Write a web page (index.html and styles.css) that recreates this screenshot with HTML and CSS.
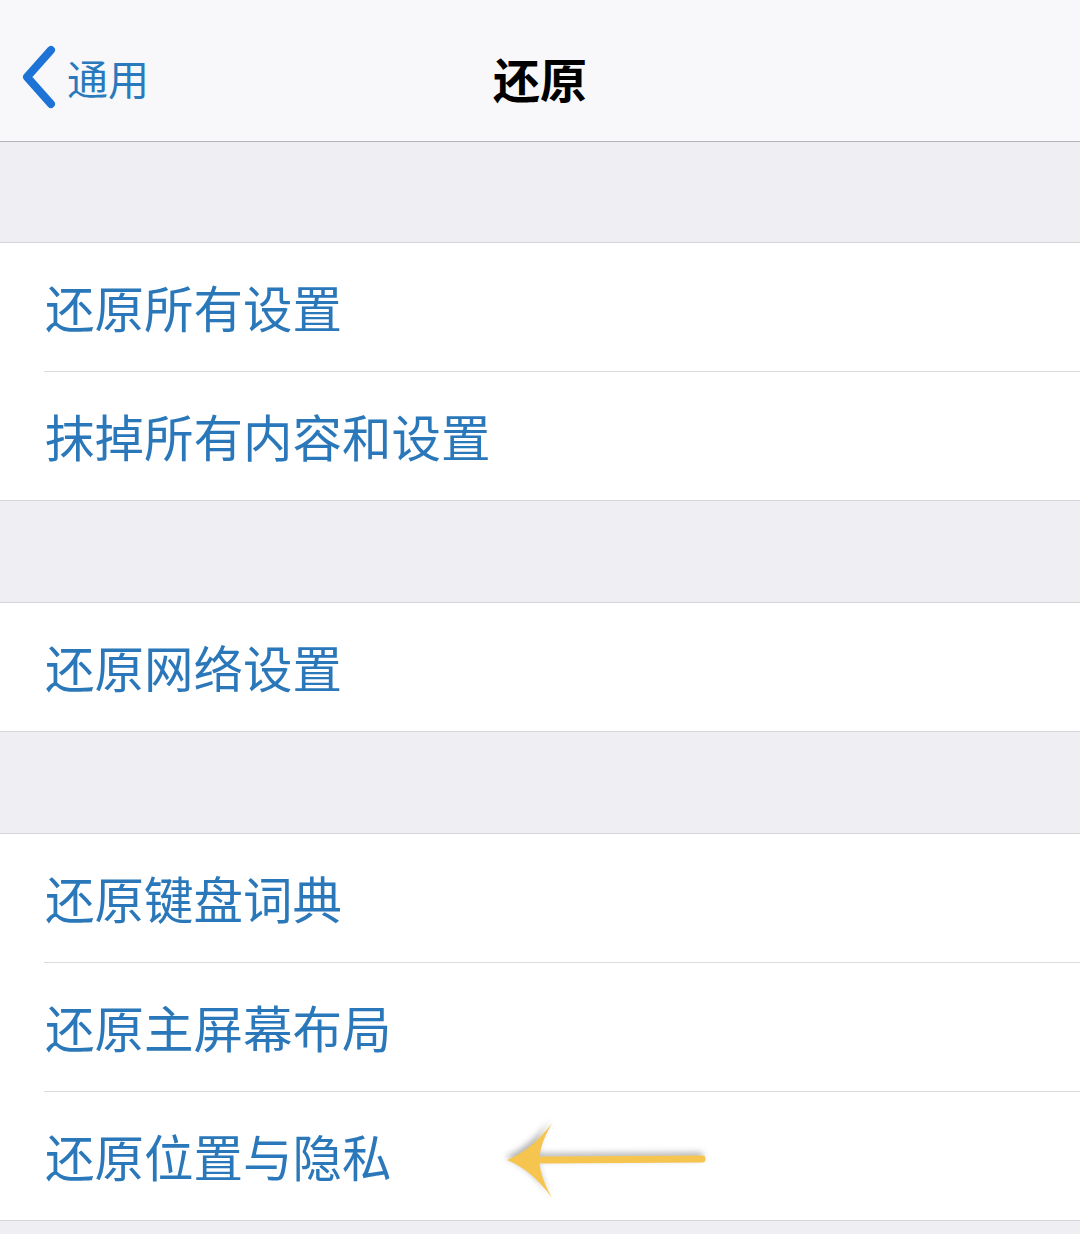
FILE: index.html
```html
<!DOCTYPE html>
<html lang="zh-CN">
<head>
<meta charset="utf-8">
<title>还原</title>
<link rel="stylesheet" href="styles.css">
</head>
<body>
  <header class="nav">
    <a class="back">
      <svg class="chevron" viewBox="0 0 40 70" width="40" height="70">
        <path d="M30 6 L6 33 L30 60" />
      </svg>
      <span class="back-label">通用</span>
    </a>
    <h1 class="title">还原</h1>
    <span class="nav-spacer"></span>
  </header>

  <div class="spacer"></div>
  <section class="group">
    <div class="row">还原所有设置</div>
    <div class="row">抹掉所有内容和设置</div>
  </section>

  <div class="spacer"></div>
  <section class="group">
    <div class="row">还原网络设置</div>
  </section>

  <div class="spacer"></div>
  <section class="group">
    <div class="row">还原键盘词典</div>
    <div class="row">还原主屏幕布局</div>
    <div class="row row-marked">还原位置与隐私
      <svg class="pointer" viewBox="0 0 210 96" width="210" height="96">
        <line class="shaft" x1="42" y1="48" x2="202" y2="47" />
        <path class="head" d="M7 48 Q32 38 52 11 Q38 36 40 48 Q38 60 52 86 Q32 58 7 48 Z" />
      </svg>
    </div>
  </section>
</body>
</html>
```

FILE: styles.css
```css
html, body {
  margin: 0;
  padding: 0;
}

body {
  background: #efeff3;
  font-family: "Noto Sans CJK SC", "Noto Sans", sans-serif;
  width: 1080px;
  min-height: 1234px;
  overflow: hidden;
}

/* top navigation bar */
.nav {
  height: 142px;
  box-sizing: border-box;
  padding-top: 14px;
  background: #f8f8fa;
  border-bottom: 1px solid #b4b4b8;
  display: grid;
  grid-template-columns: 1fr auto 1fr;
  align-items: center;
}

.back {
  display: flex;
  align-items: center;
  padding-left: 21px;
  gap: 6px;
  color: #2b79bd;
}

.chevron {
  display: block;
  margin-top: 2px;
}

.chevron path {
  fill: none;
  stroke: #1d74d6;
  stroke-width: 8;
  stroke-linecap: round;
  stroke-linejoin: round;
}

.back-label {
  font-size: 41px;
  line-height: 1;
}

.title {
  margin: 0;
  font-size: 47px;
  font-weight: 700;
  color: #000;
  line-height: 1;
}

/* grouped list */
.spacer {
  height: 100px;
}

.spacer + .group,
.group + .spacer + .group {
  margin-top: 0;
}

.group {
  background: #fff;
  border-top: 1px solid #d6d6da;
  border-bottom: 1px solid #d6d6da;
}

.group + .spacer {
  height: 101px;
}

.row {
  position: relative;
  height: 128px;
  display: flex;
  align-items: center;
  padding-left: 45px;
  font-size: 49.5px;
  color: #2a78ba;
  line-height: 1;
}

.row + .row::before {
  content: "";
  position: absolute;
  top: -1px;
  left: 44px;
  right: 0;
  height: 1px;
  background: #dcdce0;
}

.row + .row {
  margin-top: 1px;
}

.pointer {
  position: absolute;
  left: 500px;
  top: 20px;
  filter: drop-shadow(-2px -3px 3px rgba(0, 0, 0, 0.3));
}

.pointer .shaft {
  stroke: #f6c54f;
  stroke-width: 7;
  stroke-linecap: round;
}

.pointer .head {
  fill: #f6c54f;
}
```
